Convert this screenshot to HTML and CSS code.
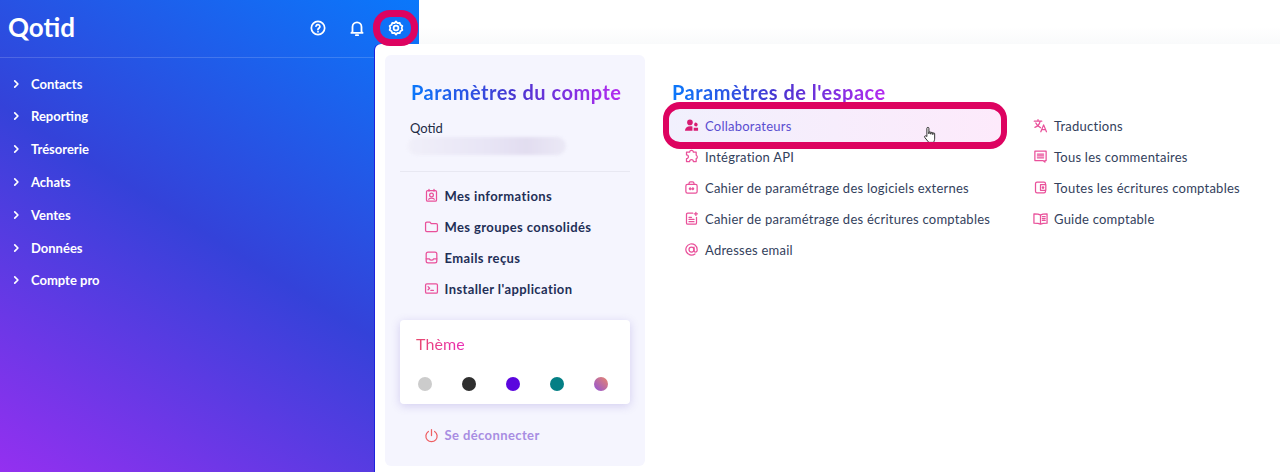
FILE: index.html
```html
<!DOCTYPE html>
<html lang="fr">
<head>
    <meta charset="UTF-8">
    <meta name="viewport" content="width=device-width, initial-scale=1.0">
    <title>Qotid</title>
    <link rel="stylesheet" href="styles.css">
</head>
<body>
    <div class="app">
        <aside class="sidebar">
            <div class="sidebar-head">
                <span class="logo">Qotid</span>
                <div class="head-icons">
                    <button class="head-btn">
                        <svg viewBox="0 0 24 24" class="head-icon head-icon-small"><circle cx="12" cy="12" r="10"/><path d="M9 9.2a3 3 0 0 1 5.900.8c0 2-3 2.600-3 4.400"/><path d="M12 17.600v.1"/></svg>
                    </button>
                    <button class="head-btn">
                        <svg viewBox="0 0 24 24" class="head-icon"><path d="M6 17V10.500a6 6 0 0 1 12 0V17l1.500 1.500h-15z"/><path d="M10.500 21.500h3"/></svg>
                    </button>
                    <button class="head-btn head-btn-marked">
                        <svg viewBox="0 0 24 24" class="head-icon head-icon-small"><path d="M12 2l2.200 2.600 3.400-.4 1 3.100 3 1.700-1.100 3 1.100 3-3 1.700-1 3.100-3.400-.4L12 22l-2.200-2.600-3.400.4-1-3.100-3-1.700 1.100-3-1.100-3 3-1.700 1-3.100 3.400.4z"/><circle cx="12" cy="12" r="3.600"/></svg>
                    </button>
                </div>
            </div>
            <nav class="side-nav">
                <a class="side-link"><svg viewBox="0 0 10 12"><path d="M2.500 1.500L7 6l-4.500 4.500"/></svg>Contacts</a>
                <a class="side-link"><svg viewBox="0 0 10 12"><path d="M2.500 1.500L7 6l-4.500 4.500"/></svg>Reporting</a>
                <a class="side-link"><svg viewBox="0 0 10 12"><path d="M2.500 1.500L7 6l-4.500 4.500"/></svg>Trésorerie</a>
                <a class="side-link"><svg viewBox="0 0 10 12"><path d="M2.500 1.500L7 6l-4.500 4.500"/></svg>Achats</a>
                <a class="side-link"><svg viewBox="0 0 10 12"><path d="M2.500 1.500L7 6l-4.500 4.500"/></svg>Ventes</a>
                <a class="side-link"><svg viewBox="0 0 10 12"><path d="M2.500 1.500L7 6l-4.500 4.500"/></svg>Données</a>
                <a class="side-link"><svg viewBox="0 0 10 12"><path d="M2.500 1.500L7 6l-4.500 4.500"/></svg>Compte pro</a>
            </nav>
        </aside>
        <main class="main">
            <div class="topbar"></div>
        </main>

        <!-- settings dropdown, opened over the sidebar -->
        <div class="settings">
            <section class="account">
                <h2 class="grad-title account-title">Paramètres du compte</h2>
                <div class="account-name">Qotid</div>
                <div class="account-mail"></div>
                <hr class="account-sep">
                <ul class="account-menu">
                    <li><svg viewBox="0 0 24 24" class="icon"><rect x="4" y="4" width="16" height="17" rx="2"/><circle cx="12" cy="11" r="3"/><path d="M7.500 18c1-2.500 8-2.500 9 0M8 2v3M16 2v3"/></svg>Mes informations</li>
                    <li><svg viewBox="0 0 24 24" class="icon"><path d="M2.500 7a2 2 0 0 1 2-2h5l2 2.500h8a2 2 0 0 1 2 2V18a2 2 0 0 1-2 2h-15a2 2 0 0 1-2-2z"/></svg>Mes groupes consolidés</li>
                    <li><svg viewBox="0 0 24 24" class="icon"><rect x="3.500" y="3.500" width="17" height="17" rx="3"/><path d="M3.500 14h5c1 3 6 3 7 0h5"/></svg>Emails reçus</li>
                    <li><svg viewBox="0 0 24 24" class="icon"><rect x="2.500" y="4.500" width="19" height="15" rx="2"/><path d="M6.500 9l2.500 2.500L6.500 14M11 15h4"/></svg>Installer l'application</li>
                </ul>
                <div class="theme-card">
                    <div class="theme-title">Thème</div>
                    <div class="theme-dots">
                        <span class="dot dot-grey"></span>
                        <span class="dot dot-dark"></span>
                        <span class="dot dot-violet"></span>
                        <span class="dot dot-teal"></span>
                        <span class="dot dot-mix"></span>
                    </div>
                </div>
                <a class="logout">
                    <svg viewBox="0 0 24 24" class="icon icon-logout"><path d="M7 5.500a9 9 0 1 0 10 0M12 2.500V12"/></svg>Se déconnecter
                </a>
            </section>

            <section class="workspace">
                <h2 class="grad-title workspace-title">Paramètres de l'espace</h2>
                <div class="workspace-cols">
                    <ul class="links links-main">
                        <li class="link-active">
                            <svg viewBox="0 0 24 24" class="icon icon-fill"><circle cx="9.500" cy="7" r="4.500"/><path d="M1.500 20.500c0-5 3.500-7.500 8-7.500 1.500 0 2.800.2 4 .7v6.800z"/><path d="M15.500 15.500h7v5h-7zM16.500 9a2.800 2.800 0 1 1 5 2.800 2.800 2.800 0 0 1-5-2.800z"/></svg>
                            Collaborateurs
                            <svg viewBox="0 0 18 22" class="hand"><path d="M5 10V2.500a1.300 1.300 0 0 1 2.600 0V9.500V7.800a1.300 1.300 0 0 1 2.500 0V10V8.500a1.300 1.300 0 0 1 2.500 0V10.500V9.500a1.200 1.200 0 0 1 2.400 0V15c0 3-1 4.500-1.500 5.500H7.500L2.500 14.500C1 12.500 3 11 5 13z"/></svg>
                        </li>
                        <li><svg viewBox="0 0 24 24" class="icon"><path d="M9 5a3 3 0 0 1 6 0h4.500v5a3 3 0 0 1 0 5.500V20H15a3 3 0 0 0-6 0H4v-4.500a3 3 0 0 0 0-6V5z"/></svg>Intégration API</li>
                        <li><svg viewBox="0 0 24 24" class="icon"><rect x="3" y="7" width="18" height="14" rx="2.500"/><path d="M8 7V5.500A2.500 2.500 0 0 1 10.500 3h3A2.500 2.500 0 0 1 16 5.500V7M9 14h6M10 12.500L8.500 14l1.500 1.500M14 12.500l1.500 1.500-1.500 1.500"/></svg>Cahier de paramétrage des logiciels externes</li>
                        <li><svg viewBox="0 0 24 24" class="icon"><path d="M14 3.500H6a2 2 0 0 0-2 2V19a2 2 0 0 0 2 2h12a2 2 0 0 0 2-2V10M8 10h4M8 13.500h8M8 17h8M19 2v5M16.500 4.500h5"/></svg>Cahier de paramétrage des écritures comptables</li>
                        <li><svg viewBox="0 0 24 24" class="icon"><circle cx="12" cy="12" r="4"/><path d="M16 8v5.500a2.500 2.500 0 0 0 5 0V12a9 9 0 1 0-3.500 7.100"/></svg>Adresses email</li>
                    </ul>
                    <ul class="links links-side">
                        <li><svg viewBox="0 0 24 24" class="icon"><path d="M2 5h12M8 2.500V5M11.500 5C10.500 10 7 13.500 3 15M4.500 8c1.500 3.500 4 6 7.500 7.500M12.500 22l4.500-11 4.500 11M14 18.500h6"/></svg>Traductions</li>
                        <li><svg viewBox="0 0 24 24" class="icon"><path d="M3 3.500h18v15h-2V21l-3-2.500H3zM7 8h10M7 11h10M7 14h10"/></svg>Tous les commentaires</li>
                        <li><svg viewBox="0 0 24 24" class="icon"><path d="M20 7V6a2.500 2.500 0 0 0-2.500-2.500H6.500A2.500 2.500 0 0 0 4 6v12a2.500 2.500 0 0 0 2.500 2.500h11A2.500 2.500 0 0 0 20 18v-1M20.500 7.500H12v9h8.500z"/><circle cx="16" cy="12" r="1.200"/></svg>Toutes les écritures comptables</li>
                        <li><svg viewBox="0 0 24 24" class="icon"><path d="M12 6.500C10 5 6.500 4.500 1.500 4.500v15c5 0 8.500.5 10.500 1.500 2-1 5.500-1.500 10.500-1.500v-15c-5 0-8.500.5-10.500 2zM12 6.500V21M15 9h4.500M15 12h4.500M15 15h4.500"/></svg>Guide comptable</li>
                    </ul>
                </div>
            </section>
        </div>
    </div>
</body>
</html>
```

FILE: styles.css
```css
*, *::after {
    box-sizing: border-box;
}
html, body {
    height: 100%;
}
body {
    margin: 0;
    font-family: Lato, "Liberation Sans", sans-serif;
    background: white;
    color: #33415c;
    overflow: hidden;
}
ul {
    list-style: none;
    margin: 0;
    padding: 0;
}
.app {
    position: relative;
    display: flex;
    height: 100%;
}

/* sidebar */
.sidebar {
    width: 419px;
    background: linear-gradient(212deg, #0a78fb 0%, #3442d9 50%, #9430f0 100%);
    color: white;
}
.sidebar-head {
    height: 58px;
    padding: 0 9px 2px 8px;
    display: flex;
    align-items: center;
    justify-content: space-between;
    border-bottom: 1px solid rgba(255, 255, 255, 0.16);
}
.logo {
    font-size: 26px;
    line-height: 30px;
    margin-top: -2px;
    font-weight: 700;
}
.head-icons {
    display: flex;
    gap: 18px;
    align-items: center;
}
.head-btn {
    position: relative;
    width: 21px;
    height: 24px;
    margin: 0;
    padding: 0;
    border: none;
    background: none;
    display: flex;
    align-items: center;
    justify-content: center;
}
.head-btn-marked {
    margin-right: 4px;
}
.head-btn-marked::after {
    content: "";
    position: absolute;
    z-index: 2;
    left: -12px;
    top: -6px;
    width: 45px;
    height: 36px;
    border: 7px solid #dd0360;
    border-radius: 17px;
}
.head-icon {
    width: 18px;
    height: 18px;
    fill: none;
    stroke: white;
    stroke-width: 2.400;
    stroke-linecap: round;
    stroke-linejoin: round;
}
.head-icon-small {
    width: 16px;
    height: 16px;
    stroke-width: 2.600;
}
.side-nav {
    padding-top: 9.200px;
}
.side-link {
    height: 32.800px;
    padding-left: 13px;
    display: flex;
    align-items: center;
    gap: 11px;
    font-size: 13px;
    font-weight: 700;
}
.side-link svg {
    width: 7px;
    height: 10px;
    fill: none;
    stroke: white;
    stroke-width: 2.400;
    stroke-linecap: round;
    stroke-linejoin: round;
}

/* top strip on the right */
.main {
    flex: 1;
}
.topbar {
    height: 45px;
    background: linear-gradient(#ffffff 60%, #f9fafb);
    border-bottom: 1px solid #e6e8ee;
}

/* settings dropdown */
.settings {
    position: absolute;
    left: 375px;
    top: 44px;
    right: 0;
    bottom: 0;
    padding: 11px 0 6px 10px;
    display: flex;
    gap: 18px;
    background: white;
    border-top-left-radius: 6px;
    box-shadow: -1px 0 0 #1d22dd;
}
.grad-title {
    margin: 0;
    font-size: 20px;
    line-height: 26px;
    font-weight: 700;
    letter-spacing: 0.5px;
    background: linear-gradient(90deg, #0a78fb, #4a35d0 50%, #b52bf0);
    -webkit-background-clip: text;
    background-clip: text;
    color: transparent;
}
.icon {
    flex: none;
    width: 15px;
    height: 15px;
    fill: none;
    stroke: #e9509a;
    stroke-width: 2;
    stroke-linecap: round;
    stroke-linejoin: round;
}
.icon-fill {
    fill: #d81b72;
    stroke: none;
}

/* account column */
.account {
    width: 260px;
    padding: 24px 15px 0 15px;
    background: #f5f5fe;
    border-radius: 6px;
}
.account-title {
    width: fit-content;
    margin-left: 11px;
}
.account-name {
    margin: 15px 0 0 10px;
    font-size: 13px;
    line-height: 16px;
    color: #222b45;
}
.account-mail {
    width: 158px;
    height: 18px;
    margin: 1px 0 0 8px;
    border-radius: 9px;
    background: linear-gradient(90deg, #f0eff9, #e8e5f5 50%, #e2ddf0 75%, #ebe9f6);
    filter: blur(1.500px);
}
.account-sep {
    margin: 16px 0 8px;
    border: none;
    border-top: 1px solid #e8e8f2;
}
.account-menu li {
    height: 31px;
    padding-left: 23.500px;
    display: flex;
    align-items: center;
    gap: 6px;
    font-size: 13px;
    font-weight: 700;
    letter-spacing: 0.4px;
    color: #1f2f57;
}
.theme-card {
    height: 84px;
    margin-top: 16px;
    padding: 14px 16px;
    background: white;
    border-radius: 4px;
    box-shadow: 0 2px 10px rgba(90, 70, 190, 0.22);
}
.theme-title {
    width: fit-content;
    font-size: 16px;
    line-height: 20px;
    letter-spacing: 0.1px;
    background: linear-gradient(90deg, #e84a6e, #ea2cb5);
    -webkit-background-clip: text;
    background-clip: text;
    color: transparent;
}
.theme-dots {
    margin-top: 23px;
    padding: 0 6px 0 2px;
    display: flex;
    justify-content: space-between;
}
.dot {
    width: 14px;
    height: 14px;
    border-radius: 50%;
}
.dot-grey { background: #cccccc; }
.dot-dark { background: #2f2f2f; }
.dot-violet { background: #5b06de; }
.dot-teal { background: #047f85; }
.dot-mix { background: linear-gradient(45deg, #9152d8, #e9876b); }
.logout {
    margin: 23px 0 0 23.500px;
    display: flex;
    align-items: center;
    gap: 6px;
    font-size: 13px;
    font-weight: 700;
    letter-spacing: 0.4px;
    color: #a88de2;
}
.icon-logout {
    stroke: #ee5f63;
}

/* workspace column */
.workspace {
    flex: 1;
    padding-top: 24px;
}
.workspace-title {
    width: fit-content;
    margin-left: 9px;
}
.workspace-cols {
    margin: 5px 0 0 5px;
    display: flex;
    gap: 26px;
}
.links li {
    height: 31px;
    padding-left: 16px;
    display: flex;
    align-items: center;
    gap: 6px;
    font-size: 13px;
    letter-spacing: 0.24px;
    color: #33415c;
}
.links-main {
    width: 334px;
    flex: none;
}
.links-main li {
    padding-left: 16px;
}
.links-side li {
    padding-left: 5px;
}
.links .link-active {
    position: relative;
    height: 39px;
    margin: -4px 0;
    border-radius: 10px;
    background: linear-gradient(90deg, #f1f0fd, #fdeafb);
    color: #5a4dd0;
}
.link-active::after {
    content: "";
    position: absolute;
    left: -5px;
    top: -4px;
    right: -5px;
    bottom: -4px;
    border: 7px solid #dd0360;
    border-left-width: 6px;
    border-right-width: 6px;
    border-radius: 17px;
}
.hand {
    position: absolute;
    left: 255px;
    top: 20px;
    width: 14px;
    height: 18px;
    fill: white;
    stroke: #222222;
    stroke-width: 1.200;
    stroke-linejoin: round;
}
```
